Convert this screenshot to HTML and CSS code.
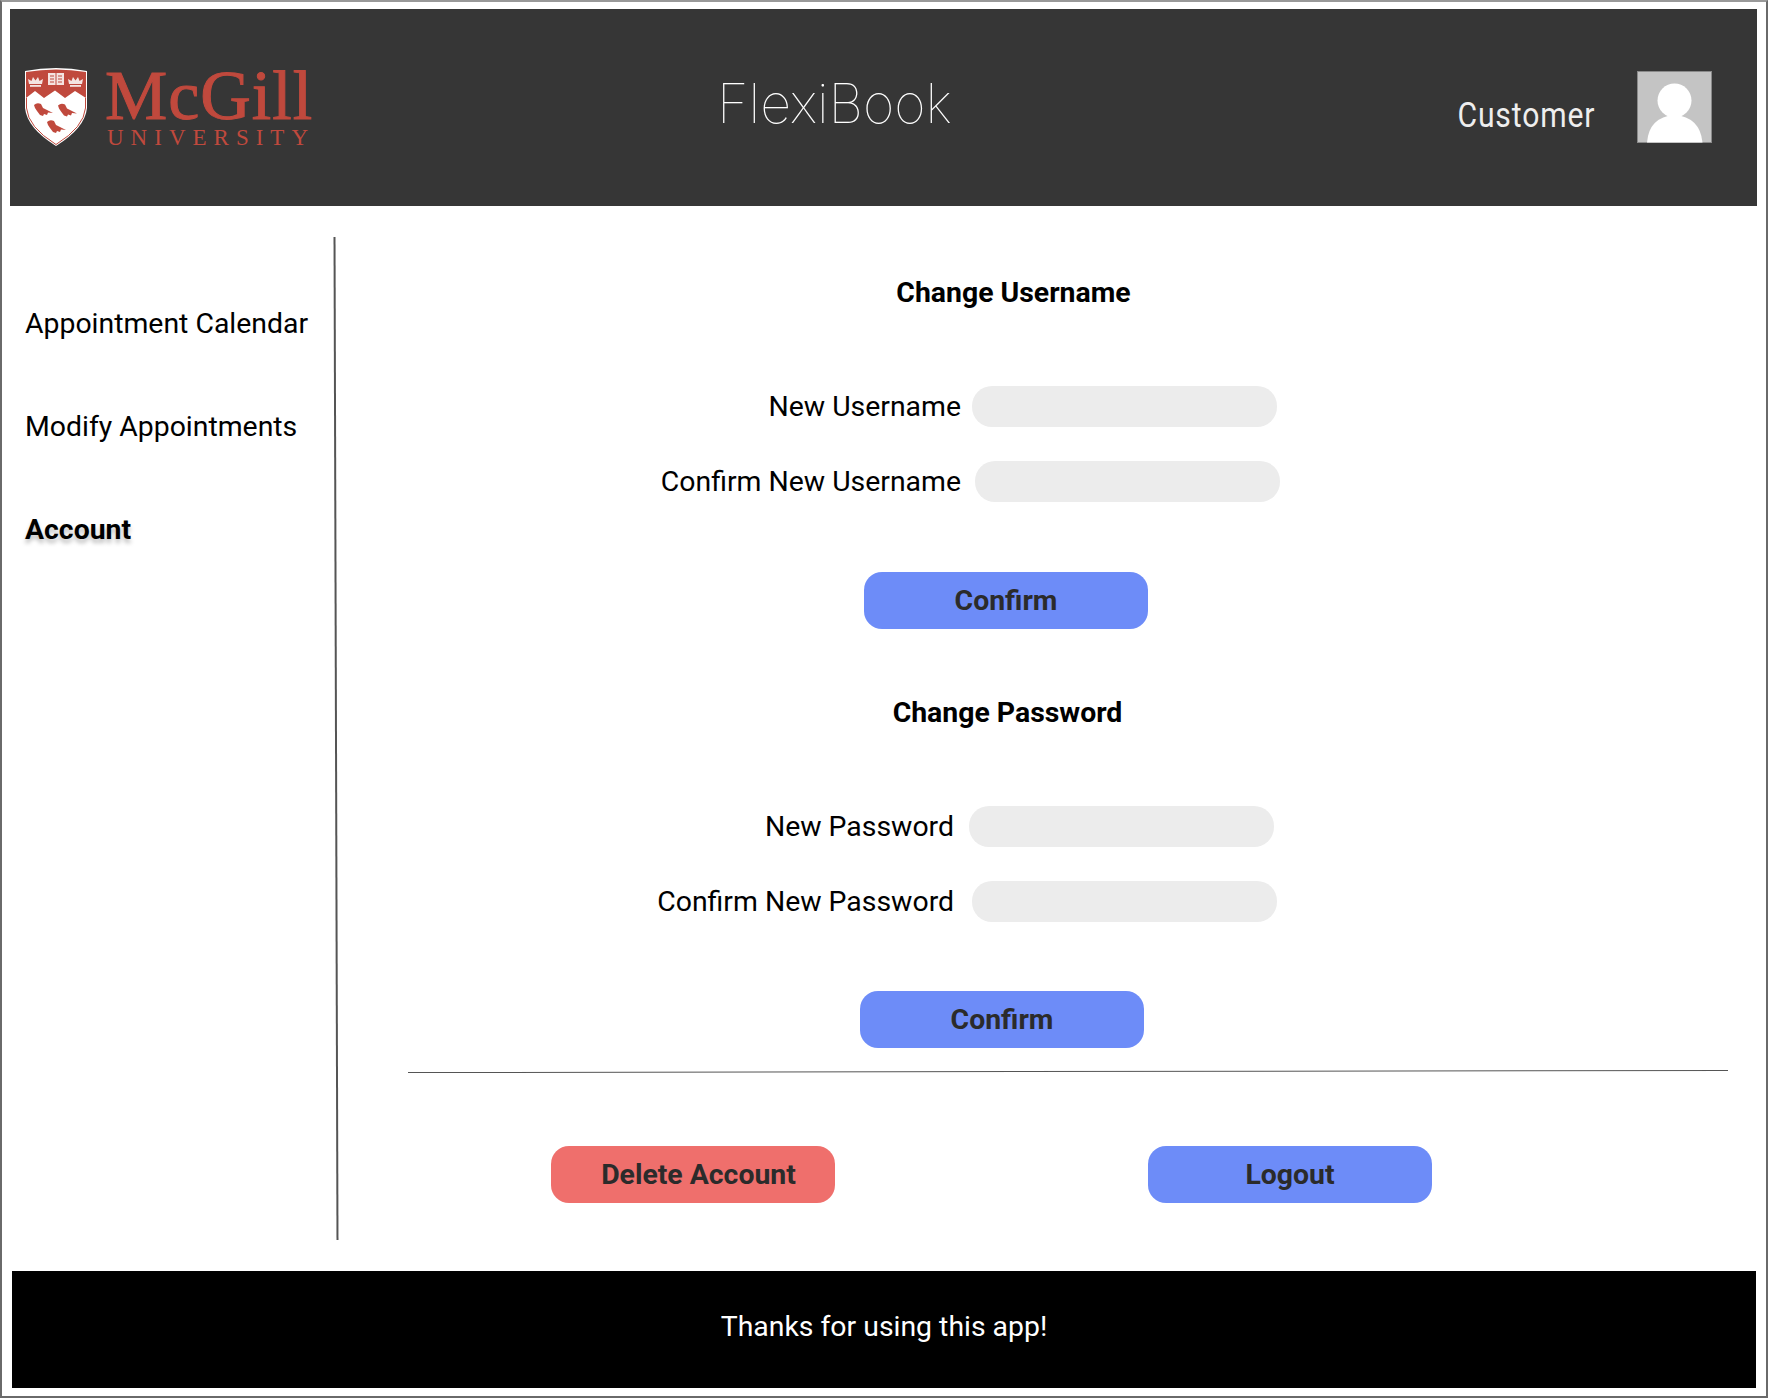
FILE: index.html
```html
<!DOCTYPE html>
<html lang="en">
<head>
  <meta charset="UTF-8">
  <meta name="viewport" content="width=device-width, initial-scale=1.0">
  <title>FlexiBook</title>
  <link rel="stylesheet" href="styles.css">
</head>
<body>
  <div class="frame">
    <!-- Header -->
    <header class="header">
      <div class="logo">
        <svg class="shield" viewBox="-1 -1 64 81" width="64" height="81">
          <defs>
            <path id="lion" d="M0 2 Q3 -1 7 1 L9 5 L13 7 L19 10 L14 9.5 L13 12 L10 11 L9 13 L6 12 L3 8 L1 5 Z"/>
            <g id="crown">
              <path d="M1 8 L0 3 L3.5 5 L5 1 L7.5 4.5 L10 1 L11.5 5 L15 3 L14 8 Z"/>
              <rect x="2" y="9" width="11" height="1.8"/>
            </g>
          </defs>
          <path d="M0 3 Q31 -3 62 3 V40 Q60 60 31 78 Q2 60 0 40 Z" fill="#fff"/>
          <path d="M1 4 Q31 -1 61 4 V30 L50 23 L40 30 L30 22.5 L19 30 L10 23 L1 30 Z" fill="#c0493d"/>
          <path d="M1.5 30 V40 Q3 59 31 76.5 Q59 59 60.5 40 V30" fill="none" stroke="#c0493d" stroke-width="1"/>
          <path d="M23 5 H30.5 V17 H23 Z M31.5 5 H39 V17 H31.5 Z" fill="#f4e4e1"/>
          <path d="M25 8 H29 M25 11 H29 M25 14 H29 M33 8 H37 M33 11 H37 M33 14 H37" stroke="#c0493d" stroke-width="1"/>
          <use href="#crown" x="3" y="8" fill="#f4e4e1"/>
          <use href="#crown" x="43" y="8" fill="#f4e4e1"/>
          <use href="#lion" x="9" y="35" fill="#c0493d"/>
          <use href="#lion" x="33" y="35.5" fill="#c0493d"/>
          <use href="#lion" x="22" y="52" fill="#c0493d"/>
        </svg>
        <div class="wordmark">
          <div class="wordmark-name">McGill</div>
          <div class="wordmark-sub">UNIVERSITY</div>
        </div>
      </div>
      <div class="app-title">FlexiBook</div>
      <div class="user">
        <span class="user-name">Customer</span>
        <svg class="avatar" viewBox="0 0 75 72" width="75" height="72">
          <rect x="0.5" y="0.5" width="74" height="71" fill="#c4c4c4" stroke="#8a8a8a"/>
          <circle cx="37.5" cy="29.5" r="17" fill="#fff"/>
          <path d="M10 71.5 Q12 46 37.5 44 Q63 46 65.5 71.5 Z" fill="#fff"/>
        </svg>
      </div>
    </header>

    <div class="content">
      <!-- Sidebar -->
      <nav class="sidebar">
        <a class="nav-item">Appointment Calendar</a>
        <a class="nav-item">Modify Appointments</a>
        <a class="nav-item active">Account</a>
      </nav>
      <div class="divider"></div>

      <main class="main">
        <!-- Change Username -->
        <section class="form-section section-username">
          <h2>Change Username</h2>
          <div class="row">
            <label>New Username</label>
            <input type="text">
          </div>
          <div class="row row-shift">
            <label>Confirm New Username</label>
            <input type="text">
          </div>
          <button class="btn btn-blue">Confirm</button>
        </section>

        <!-- Change Password -->
        <section class="form-section section-password">
          <h2>Change Password</h2>
          <div class="row">
            <label>New Password</label>
            <input type="text">
          </div>
          <div class="row row-shift">
            <label>Confirm New Password</label>
            <input type="text">
          </div>
          <button class="btn btn-blue">Confirm</button>
        </section>

        <hr class="rule">

        <div class="actions">
          <button class="btn btn-red">Delete Account</button>
          <button class="btn btn-blue">Logout</button>
        </div>
      </main>
    </div>

    <footer class="footer">Thanks for using this app!</footer>
  </div>
</body>
</html>
```

FILE: styles.css
```css
* {
  box-sizing: border-box;
}

body {
  margin: 0;
  background-color: #fff;
  font-family: Roboto, Arial, sans-serif;
}

.frame {
  width: 1768px;
  height: 1398px;
  border: 2px solid #6a6a6a;
  border-top-color: #999;
  padding: 7px 9px 8px 8px;
  display: flex;
  flex-direction: column;
}

/* Header */
.header {
  height: 197px;
  background-color: #363636;
  display: flex;
  align-items: center;
  position: relative;
}

.logo {
  display: flex;
  align-items: flex-start;
  margin-left: 14px;
  margin-top: 2px;
}

.wordmark {
  margin-left: 17px;
  margin-top: -1px;
  color: #c0493d;
  font-family: "Liberation Serif", serif;
}

.wordmark-name {
  font-size: 70px;
  line-height: 60px;
  letter-spacing: 1px;
  -webkit-text-stroke: 1px #c0493d;
}

.wordmark-sub {
  font-size: 23px;
  line-height: 24px;
  letter-spacing: 7px;
  margin-left: 2px;
}

.app-title {
  position: absolute;
  left: 707px;
  top: 63px;
  font-family: Inter, sans-serif;
  font-weight: 100;
  font-size: 54px;
  line-height: 64px;
  color: #fff;
}

.user {
  margin-left: auto;
  margin-right: 45px;
  margin-top: -2px;
  display: flex;
  align-items: center;
  gap: 42px;
  color: #eee;
}

.user-name {
  display: inline-block;
  padding-top: 18px;
  font-size: 35px;
  letter-spacing: 1px;
  transform: scaleX(0.86);
  transform-origin: right center;
}

/* Sidebar */
.content {
  flex: 1;
  display: flex;
}

.sidebar {
  width: 325px;
  padding-top: 101px;
  padding-left: 15px;
  display: flex;
  flex-direction: column;
  gap: 70px;
}

.nav-item {
  font-size: 28.4px;
  line-height: 33px;
  color: #000;
}

.nav-item.active {
  font-weight: 700;
  text-shadow: 0 4px 4px rgba(0, 0, 0, 0.25);
}

.divider {
  width: 2px;
  height: 1003px;
  margin-top: 31px;
  background-color: #555;
  transform: rotate(-0.17deg);
}

/* Main */
.main {
  flex: 1;
  padding-top: 71px;
  padding-left: 1px;
  display: flex;
  flex-direction: column;
}

.form-section {
  margin-bottom: 68px;
}

.section-username {
  width: 1351px;
}

.section-password {
  width: 1339px;
  margin-bottom: 0;
}

h2 {
  margin: 0 0 77px;
  text-align: center;
  font-size: 28.4px;
  line-height: 32px;
  font-weight: 700;
  color: #000;
}

.row {
  display: flex;
  align-items: center;
  margin-bottom: 34px;
}

.row label {
  width: 623px;
  margin-right: 11px;
  text-align: right;
  font-size: 28.4px;
  color: #000;
}

.row input {
  width: 305px;
  height: 41px;
  border: none;
  border-radius: 20px;
  background-color: #ececec;
}

.row-shift input {
  margin-left: 3px;
}

.section-password .row label {
  width: 616px;
  margin-right: 15px;
}

.btn {
  display: block;
  width: 284px;
  height: 57px;
  border: none;
  border-radius: 18px;
  font-family: Roboto, Arial, sans-serif;
  font-size: 28.4px;
  font-weight: 700;
  color: #2b2b2b;
}

.btn-blue {
  background-color: #6d8cf8;
}

.btn-red {
  padding-left: 17px;
  background-color: #ef6f6c;
}

.form-section .btn {
  margin-top: 70px;
  margin-left: 526px;
}

.section-password .btn {
  margin-left: 522px;
  margin-top: 69px;
}

.rule {
  width: 1320px;
  margin: 23px 0 0 70px;
  border: none;
  border-top: 1px solid #555;
  transform: rotate(-0.09deg);
}

.actions {
  display: flex;
  gap: 313px;
  margin: 74px 0 0 213px;
}

/* Footer */
.footer {
  height: 117px;
  margin: 0 1px 0 2px;
  padding-bottom: 6px;
  background-color: #000;
  color: #fff;
  display: flex;
  align-items: center;
  justify-content: center;
  font-size: 28.4px;
}
```
